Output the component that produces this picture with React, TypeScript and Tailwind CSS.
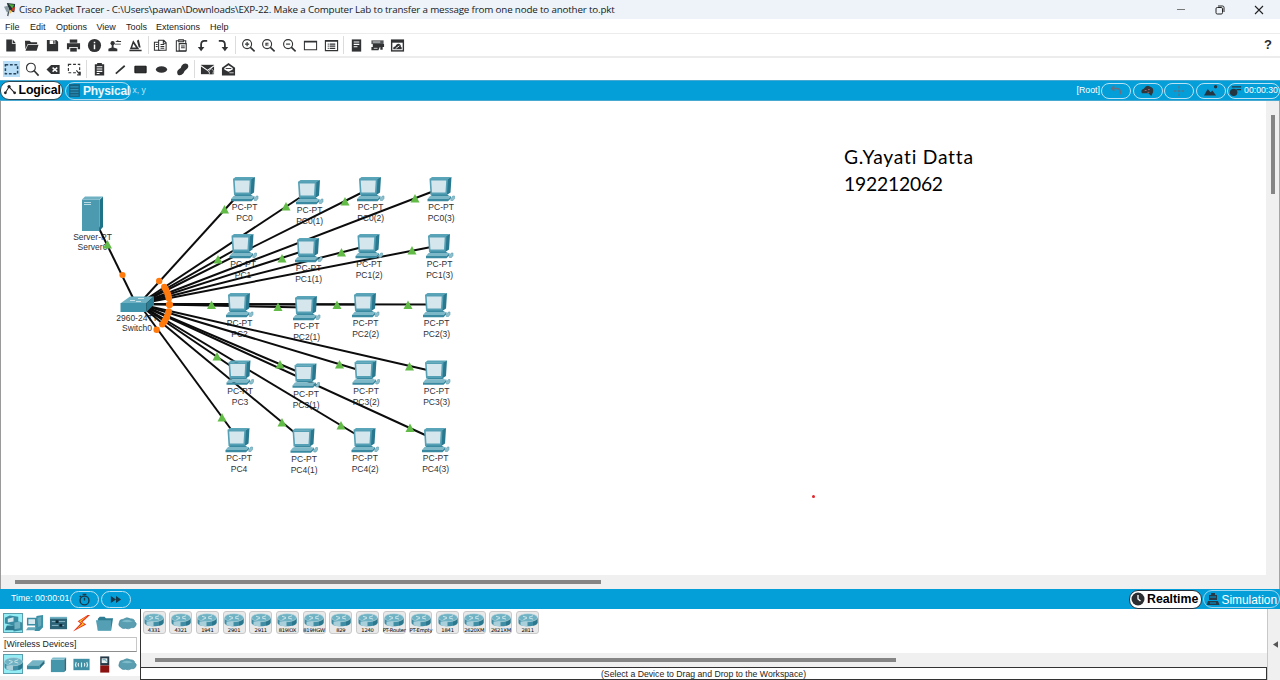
import React from "react";

const INK = "#303234";

const toolIcons: Record<string, React.ReactNode> = {
  file: <path fill={INK} d="M3.500 1.500h6V6h4v8.500h-10z M10.300 1.500l3.200 3.700h-3.200z" />,
  open: <path fill={INK} d="M1 3h5l1.500 1.500H14V6.500H4L1.500 12zM4.300 7.300H15.500l-2 6.200H1.500z" />,
  save: <path fill={INK} fillRule="evenodd" d="M2 2h10l2 2v10H2zM5 2.500v4h6v-4zM8.800 3v3h1.400V3z" />,
  print: (
    <g fill={INK}>
      <path d="M4 1.500h8V5H4zM1 5.500h14v6.500h-2.500V9.500h-9V12H1z" />
      <path d="M4.500 10.500h7v4h-7z" />
    </g>
  ),
  info: (
    <g>
      <circle cx="8" cy="8" r="7" fill={INK} />
      <path stroke="#fff" strokeWidth="1.600" d="M8 4v1.600M8 7v5" />
    </g>
  ),
  user: (
    <g fill={INK}>
      <circle cx="6" cy="5.500" r="2.300" />
      <path d="M5 7h2v3l4 1.500V14H1.500v-2.500L5 10z" />
      <path d="M9 4l3-2v1.300h3v1H9zM14.800 6H8.500v1h6.300z" />
    </g>
  ),
  activity: (
    <g fill={INK}>
      <path fillRule="evenodd" d="M5.500 2.500L12 12H2zM5.700 6L4.500 10h4z" />
      <path d="M9.500 3l2-1.500L13.500 10h-2zM1.500 12.500h13V14h-13z" />
    </g>
  ),
  copy: (
    <g fill="#fff" stroke={INK} strokeWidth="1.100">
      <path d="M1.500 4.500h6v8.500h-6z" />
      <path d="M6 2.500h5.500L14 5v8H6zM11 2.500V5.500h3M8 7h4M8 9h4M8 11h4M3 7h2M3 9h2" />
    </g>
  ),
  paste: (
    <g fill="#fff" stroke={INK} strokeWidth="1.100">
      <path d="M2.500 3h10v11h-10z" />
      <path d="M5 2h5v2H5zM5.500 6h7.500v7.500H5.500zM7.500 8.500h4M7.500 10.500h4" />
    </g>
  ),
  undo: (
    <g>
      <path fill="none" stroke={INK} strokeWidth="1.900" d="M13 3H10Q6.500 3 6.500 7v4" />
      <path fill={INK} d="M3 9.500h7L6.500 14z" />
    </g>
  ),
  redo: (
    <g>
      <path fill="none" stroke={INK} strokeWidth="1.900" d="M3 3h3Q9.500 3 9.500 7v4" />
      <path fill={INK} d="M6 9.500h7L9.500 14z" />
    </g>
  ),
  zoomIn: (
    <g fill="none" stroke={INK} strokeWidth="1.200">
      <circle cx="6.500" cy="6.500" r="4.800" />
      <path d="M4.300 6.500h4.400M6.500 4.300v4.400" />
      <path strokeWidth="1.700" d="M9.800 9.800l4.700 4.500" />
    </g>
  ),
  zoomReset: (
    <g fill="none" stroke={INK} strokeWidth="1.200">
      <circle cx="6.500" cy="6.500" r="4.800" />
      <path d="M5 5.600h3M5 7.400h3M5.300 5v3.200" />
      <path strokeWidth="1.700" d="M9.800 9.800l4.700 4.500" />
    </g>
  ),
  zoomOut: (
    <g fill="none" stroke={INK} strokeWidth="1.200">
      <circle cx="6.500" cy="6.500" r="4.800" />
      <path d="M4.300 6.500h4.400" />
      <path strokeWidth="1.700" d="M9.800 9.800l4.700 4.500" />
    </g>
  ),
  windowIcon: <path fill="none" stroke={INK} strokeWidth="1.100" d="M1.500 3.500h13v9h-13zM1.500 4.300h13" />,
  list: <path fill="none" stroke={INK} strokeWidth="1.200" d="M1.500 2.800h13v10.700h-13zM1.500 3.500h13M4 6.500h1M6 6.500h6M4 8.700h1M6 8.700h6M4 11h1M6 11h6" />,
  note: (
    <g>
      <path fill={INK} d="M3 1.500h10v13H3z" />
      <path stroke="#fff" strokeWidth="1.100" d="M5 4.300h6M5 6.800h6M5 9.300h4" />
    </g>
  ),
  device: (
    <g fill={INK}>
      <path fill="#55585b" d="M1.500 2.500h13v4h-13z" />
      <path d="M3 6.500h12v3H3zM1.500 9.500h9l-1.500 3.500H1.500z" />
      <path stroke="#fff" strokeWidth=".8" d="M3 4.300h8M4 11h4" />
      <path d="M11 9h2.500v3.500H11z" />
    </g>
  ),
  cloudWindow: (
    <g>
      <path fill={INK} d="M1 1.500h14v13H1z" />
      <path fill="#fff" d="M2.500 5h11v8h-11z" />
      <path fill={INK} d="M3.500 12q-.5-3 2-3Q7.500 5 10 6.500q2 1 1.500 2.500 1.500.5 1 3z" />
      <path stroke="#fff" d="M6 11.300l4-3" />
    </g>
  ),
  select: (
    <path fill="none" stroke="#28465f" strokeWidth="1.600" strokeDasharray="3 1.800" d="M1.500 3h13v9.500h-13z" />
  ),
  magnifier: (
    <g fill="none" stroke={INK}>
      <circle cx="6.300" cy="6" r="4.700" strokeWidth="1.200" />
      <path strokeWidth="1.700" d="M9.500 9l5 5.500" />
    </g>
  ),
  eraser: (
    <g>
      <path fill={INK} d="M.5 8L5.500 3.300h9v9.400h-9z" />
      <path stroke="#fff" strokeWidth="1.500" d="M7 6l5 4.300M12 6l-5 4.300" />
    </g>
  ),
  resize: (
    <g>
      <path fill="none" stroke={INK} strokeWidth="1.200" strokeDasharray="3 2" d="M1.500 2.500h12v9h-12z" />
      <path stroke={INK} strokeWidth="1.300" d="M10 9l4 4.500M14 10.500v3.300h-3.200" fill="none" />
    </g>
  ),
  clipNote: (
    <g>
      <path fill={INK} d="M3 2.500h2.500V1h5v1.500H13v12H3z" />
      <path stroke="#fff" strokeWidth="1.100" d="M5 5h6M5 7.500h6M5 10h6M5 12.300h3" />
    </g>
  ),
  line: <path stroke={INK} strokeWidth="1.800" d="M3 12.500L12.500 4" />,
  rect: <path fill={INK} stroke="#111" d="M2 4.500h12v7H2z" />,
  ellipse: <ellipse cx="8" cy="8" rx="6" ry="3.400" fill={INK} />,
  freeform: <path fill={INK} d="M7 4q3-4 6.500-1.500 2 3-1.500 5.500-2 1-3 4-3 3.500-6 1.500Q1 10 4.500 7.500 6.500 7 7 4z" />,
  mail: (
    <g>
      <path fill={INK} d="M1 3h14v10H1z" />
      <path fill="none" stroke="#fff" strokeWidth="1.100" d="M1 4l7 5 7-5" />
      <path fill={INK} stroke="#fff" strokeWidth=".7" d="M10 13.500v-3H8.500L12 7l3.500 3.500H14v3z" />
    </g>
  ),
  mailOpen: (
    <g>
      <path fill={INK} d="M1 6l7-5 7 5v8.500H1z" />
      <path fill="#fff" d="M3.500 6.500L8 3.500l4.500 3v1.500L8 10.500l-4.500-2.500z" />
      <path fill={INK} d="M5 6.500h6v1H5z" />
      <path stroke="#fff" strokeWidth=".8" d="M9 11.500h4.500" />
    </g>
  ),
};

function Tool({ name, active }: { name: string; active?: boolean }) {
  return (
    <div className="flex h-[18px] w-[20.800px] shrink-0 items-center justify-center">
      <div className={`flex h-4 w-[17px] items-center justify-center ${active ? "bg-[#b9def8]" : ""}`}>
        <svg viewBox="0 0 16 16" className="h-[15px] w-[15px] shrink-0">{toolIcons[name]}</svg>
      </div>
    </div>
  );
}

const Sep = () => <div className="mx-[1.600px] h-[18px] w-px shrink-0 bg-[#dcdcdc]" />;

function ToolRow({ groups, active }: { groups: string[][]; active?: string }) {
  return (
    <>
      {groups.map((g, i) => (
        <React.Fragment key={i}>
          {i > 0 && <Sep />}
          {g.map((n) => <Tool key={n} name={n} active={n === active} />)}
        </React.Fragment>
      ))}
    </>
  );
}

const menus: [string, string][] = [
  ["File", "w-[25px]"],
  ["Edit", "w-[26px]"],
  ["Options", "w-[40.500px]"],
  ["View", "w-[29.500px]"],
  ["Tools", "w-[30px]"],
  ["Extensions", "w-[54px]"],
  ["Help", "w-[30px]"],
];

type Pc = { name: string; r: number; t: number; ax: number; ay: number };
const pcs: Pc[] = [
  { name: "PC0", r: 255, t: 177, ax: 224.5, ay: 210 },
  { name: "PC0(1)", r: 320, t: 180, ax: 286, ay: 207 },
  { name: "PC0(2)", r: 381, t: 177, ax: 345, ay: 202 },
  { name: "PC0(3)", r: 451.5, t: 177, ax: 415, ay: 199 },
  { name: "PC1", r: 253.5, t: 234, ax: 218, ay: 260 },
  { name: "PC1(1)", r: 319, t: 238, ax: 282, ay: 259 },
  { name: "PC1(2)", r: 379.5, t: 234, ax: 341.5, ay: 253 },
  { name: "PC1(3)", r: 450, t: 234, ax: 412, ay: 251 },
  { name: "PC2", r: 250, t: 293, ax: 211.5, ay: 305.5 },
  { name: "PC2(1)", r: 317, t: 296, ax: 278, ay: 307.5 },
  { name: "PC2(2)", r: 376, t: 293, ax: 337, ay: 305.5 },
  { name: "PC2(3)", r: 447, t: 293, ax: 408, ay: 305.5 },
  { name: "PC3", r: 250.5, t: 360.5, ax: 217, ay: 357 },
  { name: "PC3(1)", r: 316.5, t: 363.5, ax: 280, ay: 365 },
  { name: "PC3(2)", r: 376.5, t: 360.5, ax: 339.5, ay: 365 },
  { name: "PC3(3)", r: 447, t: 360.5, ax: 409.5, ay: 367 },
  { name: "PC4", r: 249.5, t: 428, ax: 222, ay: 418 },
  { name: "PC4(1)", r: 314.5, t: 428.5, ax: 282, ay: 423 },
  { name: "PC4(2)", r: 375.5, t: 428, ax: 341, ay: 426 },
  { name: "PC4(3)", r: 446, t: 428, ax: 410, ay: 428.5 },
];

const HUB = { x: 139, y: 304 };
const CANVAS_TOP = 101;

function PcShape({ r, t }: { r: number; t: number }) {
  return (
    <g transform={`translate(${r - 24} ${t})`}>
      <path fill="#28788f" d="M18 2.500L24 0 23 15.500 18.500 18.500z" />
      <path fill="#5aa5b8" d="M2 2L4.500 0H24L20.500 2z" />
      <path fill="#55a0b4" d="M2 1.800h18.500L19.500 18H3z" />
      <path fill="#d6e6ed" d="M3.700 3.600h15l-.7 12H4.500z" />
      <path fill="#3a8aa1" d="M5 17.500h14.500l2.500 1.500H3z" />
      <path fill="#7db8c8" d="M2.500 19h21l-3 3H0z" />
      <path fill="#3a8aa1" d="M0 22h20.500l3-3v2.300l-3 3H0z" />
      <path fill="#8fc0ce" stroke="#5a9fb2" strokeWidth=".6" d="M23.300 22l2-3h1.700v2.500l-1.500 2h-2.200z" />
    </g>
  );
}

function NodeLabel({ x, y, lines }: { x: number; y: number; lines: [string, string] }) {
  return (
    <div
      className="absolute w-20 -translate-x-1/2 text-center text-[8.500px] leading-[10.800px] text-[#2e3035]"
      style={{ left: x, top: y }}
    >
      <div>{lines[0]}</div>
      <div>{lines[1]}</div>
    </div>
  );
}

const Tri = ({ x, y }: { x: number; y: number }) => (
  <path fill="#62bb46" d={`M${x} ${y - 5}l4.500 8.500h-9z`} />
);

function Topology() {
  return (
    <>
      {pcs.map((p) => (
        <NodeLabel key={p.name} x={p.r - 10.4} y={p.t + 25.3 - CANVAS_TOP} lines={["PC-PT", p.name]} />
      ))}
      <NodeLabel x={92.5} y={231.7 - CANVAS_TOP} lines={["Server-PT", "Server0"]} />
      <NodeLabel x={137} y={312.7 - CANVAS_TOP} lines={["2960-24TT", "Switch0"]} />
      <svg className="absolute left-0 top-0 h-[474px] w-[600px]" viewBox="0 101 600 474">
        <g stroke="#0c0c0c" strokeWidth="2">
          <path d="M92 214L136 304" />
          {pcs.map((p) => (
            <path key={p.name} d={`M${HUB.x} ${HUB.y}L${p.r - 11} ${p.t + 11.5}`} />
          ))}
        </g>
        {pcs.map((p) => <PcShape key={p.name} r={p.r} t={p.t} />)}
        <path fill="#1f7389" d="M99.500 200l3.500-3.500V227l-3.500 4z" />
        <path fill="#4b9ab0" d="M82 199.500h17.500V231H82z" />
        <path fill="#6fb1c3" d="M82 199.500l3-3h18l-3.500 3z" />
        <path fill="none" stroke="#c8e2ea" strokeWidth=".9" d="M84 202.500h7M84 204.500h7" />
        <path fill="#6db1c2" d="M121 303l9-6.500h24L146.500 303z" />
        <path fill="#3f93aa" d="M120.500 303h26v9h-26z" />
        <path fill="#2b7b92" d="M146.500 303l7.500-6.500v8l-7.500 7.500z" />
        <path stroke="#d3e8ee" strokeWidth=".9" fill="none" d="M130 300.500h5M138 298.500h6M136 301.500h5" />
        <g fill="#ff7a0d">
          {pcs.map((p) => {
            const a = Math.atan2(p.t + 11.5 - HUB.y, p.r - 11 - HUB.x);
            return <circle key={p.name} cx={138 + 31.5 * Math.cos(a)} cy={304.3 + 31.5 * Math.sin(a)} r="3.200" />;
          })}
          <circle cx="122.500" cy="275" r="3.100" />
        </g>
        {pcs.map((p) => <Tri key={p.name} x={p.ax} y={p.ay} />)}
        <Tri x={107.5} y={245} />
      </svg>
    </>
  );
}

function Pill({ children, className }: { children?: React.ReactNode; className: string }) {
  return (
    <div className={`flex shrink-0 items-center justify-center rounded-full border border-[#b9e2f5] ${className}`}>
      {children}
    </div>
  );
}

function RouterShape() {
  return (
    <g>
      <path fill="#3f8ea5" d="M.5 5v5.500c0 5 19 5 19 0V5z" />
      <path fill="#a9d0da" d="M2.500 9v4c2.500 1 4.500 1.200 7 1.200V9z" />
      <path fill="#2b788e" d="M15 8l4.500-3v5.500c-.5 1.500-2 2.500-4.500 3z" />
      <ellipse cx="10" cy="5" rx="9.500" ry="4.300" fill="#6fb2c3" stroke="#c6dfe6" strokeWidth=".6" />
      <path stroke="#d9ebef" strokeWidth=".9" fill="none" d="M5 3.500l4 1.300M15 6.500l-4-1.200M5.500 7L9 5.500M11 4.500L15 3" />
    </g>
  );
}

const Cloud = () => (
  <g>
    <path fill="#5a9eb1" stroke="#3f869a" strokeWidth=".6" d="M3 14Q-.5 12 1.500 8.500q0-3 4-3 3.500-3 7.500-.5 4.500 0 4.500 3 3 2 1 4.500-1 2.500-4.500 2-3 2-6 .5-3 1-5-1z" />
    <path fill="#7ebccb" d="M4 8Q9 4 15.500 8 10 9.500 4 8z" />
  </g>
);

const catsTop: React.ReactNode[] = [
  <g key="a">
    <path fill="#3a8ca3" d="M1 4l5-2.500L15 3v5l4 1v8l-9 1.500V12L1 10z" />
    <path fill="#cfe6ed" d="M4 5l6-1.500V8L4 9z" />
    <path fill="#2a768c" d="M3 12h11l-3 5H1z" />
    <path fill="#70b1c2" d="M11 9l6-1v7l-6 1z" />
  </g>,
  <g key="b">
    <path fill="#3d8fa6" d="M11 2l7-1v13l-4 4H9zM1 4h10v8H1z" />
    <path fill="#d7e9ef" d="M2.500 5.500h7v5h-7z" />
    <path fill="#65a9bb" d="M2 14h9l-2 3H0zM12 4l4-1v9l-3 2z" />
  </g>,
  <g key="c">
    <path fill="#2c6377" d="M1 4h18v12H1z" />
    <path fill="#6fb1c3" d="M1 3h18v2H1z" />
    <path stroke="#8fbccb" strokeWidth="1" d="M3 8h4M10 8h7M3 12h7M12 12h4" />
    <path fill="#102b38" d="M7 6.500h3v3H7zM11 10.500h3v3h-3z" />
  </g>,
  <g key="d">
    <path fill="#e8331c" d="M16.500 1L6 7.500 9 10l-8 8.500L15 11l-4-2.500L19 1z" />
    <path fill="#ffc928" d="M16 2L7.500 7.700 11 10l-6 5.500 8-4.700L9.500 8z" />
  </g>,
  <g key="e">
    <path fill="#2e7d93" d="M3 5l2-2h5l1.500 1.500H19L17 17H3z" />
    <path fill="#549fb3" d="M1 6.500h16V17.500H3z" />
  </g>,
  <Cloud key="f" />,
];

const catsBottom: React.ReactNode[] = [
  <g key="a" transform="translate(0 2)"><RouterShape /></g>,
  <g key="b">
    <path fill="#75b4c4" d="M1 11l6-5.500h12.500L14 11z" />
    <path fill="#3b8ba1" d="M1 11h13v4H1z" />
    <path fill="#276f84" d="M14 11l5.500-5.500V9L14 15z" />
  </g>,
  <g key="c">
    <path fill="#4595ab" d="M2 5h14v13H2z" />
    <path fill="#7fbccb" d="M2 5l2-2.500h14L16 5z" />
    <path fill="#276f84" d="M16 5l2-2.500V16l-2 2z" />
  </g>,
  <g key="d">
    <path fill="#418fa5" d="M1.500 4h17v12h-17z" />
    <path fill="none" stroke="#e5f2f5" strokeWidth="1.200" d="M4.500 7.500q-1.500 2.500 0 5.500M7 8.500q-1 1.500 0 3.500M15.500 7.500q1.500 2.500 0 5.500M13 8.500q1 1.500 0 3.500M10 8v5" />
  </g>,
  <g key="e">
    <path fill="#263746" d="M5.500 1.500h9.500V11H5.500z" />
    <path fill="#e4ecef" d="M7 3.500h6V8.500H7z" />
    <path fill="#8b1111" d="M5.500 11H15v7.500H5.500z" />
    <path stroke="#489aae" d="M8 5h3l1 2" fill="none" />
  </g>,
  <Cloud key="f" />,
];

function CategoryRow({ items }: { items: React.ReactNode[] }) {
  return (
    <div className="flex h-[21px] gap-[2.900px] pl-[3px]">
      {items.map((it, i) => (
        <div
          key={i}
          className={`flex h-[20px] w-5 shrink-0 items-center justify-center ${i === 0 ? "border border-[#5a9fae] bg-[#94edf5]" : ""}`}
        >
          <svg viewBox="0 0 20 20" className="h-[19px] w-[19px] shrink-0">{it}</svg>
        </div>
      ))}
    </div>
  );
}

const routers = ["4331", "4321", "1941", "2901", "2911", "819IOX", "819HGW", "829", "1240", "PT-Router", "PT-Empty", "1841", "2620XM", "2621XM", "2811"];

export default function App() {
  return (
    <div className="flex h-[680px] w-[1280px] flex-col overflow-hidden whitespace-nowrap bg-white font-['Liberation_Sans',sans-serif] text-[#1c1c1c]">
      <header className="flex h-[19px] shrink-0 items-center bg-[#edf3f8] pl-[4px]">
        <svg viewBox="0 0 14 16" className="h-[15px] w-[13px]">
          <path fill="#23303a" d="M3 1l9 1-1 9-5-1z" />
          <path fill="#4fae3b" d="M5 2l6 1-2 4z" />
          <path fill="#c33a28" d="M9 6l3-1-1 5-3-1z" />
          <path fill="#e9c15a" d="M6 8l3 2-3 3z" />
          <path fill="#8a9aa3" d="M0 5l4-1 2 6-3 1z" />
          <path stroke="#46535b" strokeWidth="1.400" d="M5 10l-1 5" />
        </svg>
        <span className="ml-[2px] w-[597px] text-[9.800px] leading-[19px] tracking-[-0.163px] text-[#16191c] font-['Open_Sans','Noto_Sans',sans-serif]">
          Cisco Packet Tracer - C:\Users\pawan\Downloads\EXP-22. Make a Computer Lab to transfer a message from one node to another to.pkt
        </span>
        <div className="ml-auto flex items-center gap-[29px] pr-[16px]">
          <svg viewBox="0 0 10 10" className="h-[10px] w-[10px]"><path stroke="#777" d="M1 4.500h8" /></svg>
          <svg viewBox="0 0 10 10" className="h-[10px] w-[10px]" fill="none" stroke="#222">
            <rect x="1" y="2.500" width="6.500" height="6.500" rx="1.300" />
            <path d="M3 1h4.500q1.500 0 1.500 1.500V7" />
          </svg>
          <svg viewBox="0 0 10 10" className="h-[10px] w-[10px]"><path stroke="#222" strokeWidth="1.100" d="M1 1l8 8M9 1L1 9" /></svg>
        </div>
      </header>

      <nav className="flex h-[15px] shrink-0 items-center border-b border-[#ececec] pl-[5px] pt-px text-[9px] leading-[14px]">
        {menus.map(([m, w]) => <span key={m} className={`shrink-0 ${w}`}>{m}</span>)}
      </nav>

      <div className="flex h-[24px] shrink-0 items-center border-b-2 border-[#ececec] pl-[0.600px]">
        <ToolRow
          groups={[
            ["file", "open", "save", "print", "info", "user", "activity"],
            ["copy", "paste", "undo", "redo"],
            ["zoomIn", "zoomReset", "zoomOut", "windowIcon", "list"],
            ["note", "device", "cloudWindow"],
          ]}
        />
        <span className="ml-auto pr-[8px] text-[13px] font-bold text-[#2a2a2a]">?</span>
      </div>
      <div className="flex h-[22px] shrink-0 items-center pl-[1.500px]">
        <ToolRow
          active="select"
          groups={[
            ["select", "magnifier", "eraser", "resize"],
            ["clipNote", "line", "rect", "ellipse", "freeform"],
            ["mail", "mailOpen"],
          ]}
        />
      </div>

      <div className="flex h-[21px] shrink-0 items-center border-b border-t border-[#4aa9d0] bg-[#049fd9] text-white">
        <div className="flex h-[19px] w-[63px] shrink-0 items-center rounded-[9px] border border-[#2b4a58] bg-white pl-[2px] text-black">
          <svg viewBox="0 0 14 14" className="h-[13px] w-[14px]">
            <path fill="none" stroke="#222" strokeWidth="1.100" d="M2 9.500l4-6.500 6 6.500" />
            <circle cx="2" cy="9.500" r="1.500" fill="#222" />
            <circle cx="6" cy="2.800" r="1.700" fill="#222" />
            <circle cx="12" cy="9.500" r="1.500" fill="#222" />
          </svg>
          <span className="ml-[1.500px] text-[12.300px] font-bold tracking-[-0.100px]">Logical</span>
        </div>
        <div className="ml-[2px] flex h-[18px] w-[66px] shrink-0 items-center rounded-[9px] border border-[#a9dcf2] pl-[3px]">
          <svg viewBox="0 0 12 14" className="h-[13px] w-[11px]">
            <path fill="#17607f" d="M0 0h12v14H0z" />
            <path stroke="#2c93bd" strokeWidth="1.200" d="M1.500 3h9M1.500 6h9M1.500 9h9M1.500 12h9" />
          </svg>
          <span className="ml-[3px] text-[12px] font-bold tracking-[-0.200px] text-[#eaf7fd]">Physical</span>
        </div>
        <span className="ml-[1.500px] text-[8.500px] text-[#bfe6f7]">x, y</span>
        <span className="ml-auto mr-[1px] text-[8.800px]">[Root]</span>
        <div className="flex gap-[1.500px]">
          <Pill className="h-[16px] w-[30px]">
            <svg viewBox="0 0 16 14" className="h-[12px] w-[14px]"><path fill="none" stroke="#6b6f80" strokeWidth="1.800" d="M6 1L3 4l3 3M3 4h7q4 1 3 7" /></svg>
          </Pill>
          <Pill className="h-[16px] w-[30px]">
            <svg viewBox="0 0 16 14" className="h-[13px] w-[15px]">
              <path fill="#33373b" d="M2 10Q0 6 4 5q3-5 7-2 4 1 3 6l-2 4-3-3z" />
              <path stroke="#b0626e" d="M5 7h2M8.500 6h2M8 9h2" />
            </svg>
          </Pill>
          <Pill className="h-[16px] w-[30px]">
            <svg viewBox="0 0 16 14" className="h-[12px] w-[14px]"><path stroke="#56758c" strokeWidth="1.500" strokeDasharray="3 1.500" d="M8 1v12M2 7h12" /></svg>
          </Pill>
          <Pill className="h-[16px] w-[30px]">
            <svg viewBox="0 0 16 14" className="h-[13px] w-[15px]">
              <path fill="#263640" d="M1 12.500l4-7 3 3.500 2-2 4 5.500z" />
              <circle cx="13.500" cy="3" r="1.800" fill="#263640" />
            </svg>
          </Pill>
          <Pill className="h-[16px] w-[53px]">
            <svg viewBox="0 0 14 14" className="h-[13px] w-[13px] shrink-0">
              <circle cx="5" cy="9" r="4" fill="#263640" />
              <path stroke="#263640" strokeWidth="1.400" d="M3 3h10M8 6h5" />
            </svg>
            <span className="ml-[2px] text-[8.700px]">00:00:30</span>
          </Pill>
        </div>
      </div>

      <main className="flex h-[488px] shrink-0 border-l border-[#9a9a9a] bg-[#f0f0f0]">
        <div className="flex w-[1265px] shrink-0 flex-col">
          <div className="relative -ml-px h-[474px] w-[1266px] shrink-0 overflow-hidden border-l border-[#9a9a9a] bg-white">
            <div className="absolute inset-y-0 -left-px">
              <Topology />
            </div>
            <div className="absolute left-[843px] top-[42px] text-[19.300px] leading-[27px] text-black font-['Lato',sans-serif]">
              <div className="tracking-[0.750px]">G.Yayati Datta</div>
              <div className="tracking-[-0.200px]">192212062</div>
            </div>
            <div className="absolute left-[811px] top-[394px] h-[3px] w-[3px] rounded-full bg-[#e3242b]" />
          </div>
          <div className="flex h-[14px] items-center pl-[14px]">
            <div className="h-[4px] w-[586px] bg-[#858585]" />
          </div>
        </div>
        <div className="flex grow justify-center border-r border-[#a5a5a5] pt-[14px]">
          <div className="h-[79px] w-[4px] bg-[#858585]" />
        </div>
      </main>

      <div className="flex h-[20px] shrink-0 items-center bg-[#049fd9] text-white">
        <span className="ml-[11px] text-[8.800px]">Time: 00:00:01</span>
        <Pill className="ml-[1px] h-[17px] w-[29px]">
          <svg viewBox="0 0 14 14" className="h-[13px] w-[13px]" fill="none" stroke="#1c3947" strokeWidth="1.500">
            <circle cx="7" cy="8" r="4.800" />
            <path d="M7 8V5M5 1.500h4M3 3L2 4.500" />
          </svg>
        </Pill>
        <Pill className="ml-[2px] h-[17px] w-[30px]">
          <svg viewBox="0 0 14 10" className="h-[9px] w-[12px]"><path fill="#17394a" d="M1 1l6 4-6 4zM7 1l6 4-6 4z" /></svg>
        </Pill>
        <div className="ml-auto flex h-[19px] w-[73px] shrink-0 items-center rounded-[9px] border border-[#25303a] bg-white pl-[1px] text-black">
          <svg viewBox="0 0 14 14" className="h-[14px] w-[14px]">
            <circle cx="7" cy="7" r="6.500" fill="#2b2d30" />
            <path fill="none" stroke="#fff" strokeWidth="1.300" d="M7 3v4l2.500 2" />
          </svg>
          <span className="ml-[2px] text-[12.300px] font-bold">Realtime</span>
        </div>
        <div className="ml-[1px] flex h-[18px] w-[77px] shrink-0 items-center rounded-[9px] border border-[#9dd7f0] pl-[2px]">
          <svg viewBox="0 0 14 14" className="h-[14px] w-[14px]">
            <path fill="#253b48" d="M5 1h4v2h2v5H3V3h2zM2 9h10l1.500 4H.5z" />
            <path stroke="#049fd9" d="M4 5h6M4 11h6" />
          </svg>
          <span className="ml-[1.500px] pt-px text-[11.900px] leading-[14px]">Simulation</span>
        </div>
      </div>

      <footer className="flex h-[71px] shrink-0">
        <div className="flex w-[140px] shrink-0 flex-col bg-white pt-[4px]">
          <CategoryRow items={catsTop} />
          <div className="mx-[3px] mb-[2px] mt-[3px] h-[15px] border-b border-r border-t border-b-[#8e8e8e] border-r-[#c8c8c8] border-t-[#c4c4c4] pl-[1px] text-[8.800px] leading-[13px]">
            [Wireless Devices]
          </div>
          <CategoryRow items={catsBottom} />
          <div className="mt-auto h-[4px] bg-[#f0f0f0]" />
        </div>
        <div className="flex w-[1127px] shrink-0 flex-col border-l border-[#333]">
          <div className="flex h-[44px] gap-[3.700px] pl-[1.500px] pt-[2px]">
            {routers.map((r) => (
              <div key={r} className="flex h-[23px] w-[23px] shrink-0 flex-col items-center rounded-[3px] border border-[#c9c9c9] bg-[#e9e9e9]">
                <svg viewBox="0 0 20 15" preserveAspectRatio="none" className="mt-px h-[14px] w-[20px] shrink-0"><RouterShape /></svg>
                <span className="text-[5.200px] leading-[6px] tracking-[-0.200px] text-black font-['DejaVu_Sans',sans-serif]">{r}</span>
              </div>
            ))}
          </div>
          <div className="flex h-[14px] items-center bg-[#f0f0f0] pl-[14px]">
            <div className="h-[4px] w-[741px] bg-[#858585]" />
          </div>
          <div className="h-[13px] border-y border-r border-[#333] bg-white text-center text-[8.700px] leading-[12px]">
            (Select a Device to Drag and Drop to the Workspace)
          </div>
        </div>
        <div className="flex grow items-center justify-end border-l border-[#c8c8c8] bg-[#f0f0f0] pr-[2px]">
          <svg viewBox="0 0 6 8" className="h-[7px] w-[5px]"><path fill="#555" d="M6 0v8L0 4z" /></svg>
        </div>
      </footer>
    </div>
  );
}
